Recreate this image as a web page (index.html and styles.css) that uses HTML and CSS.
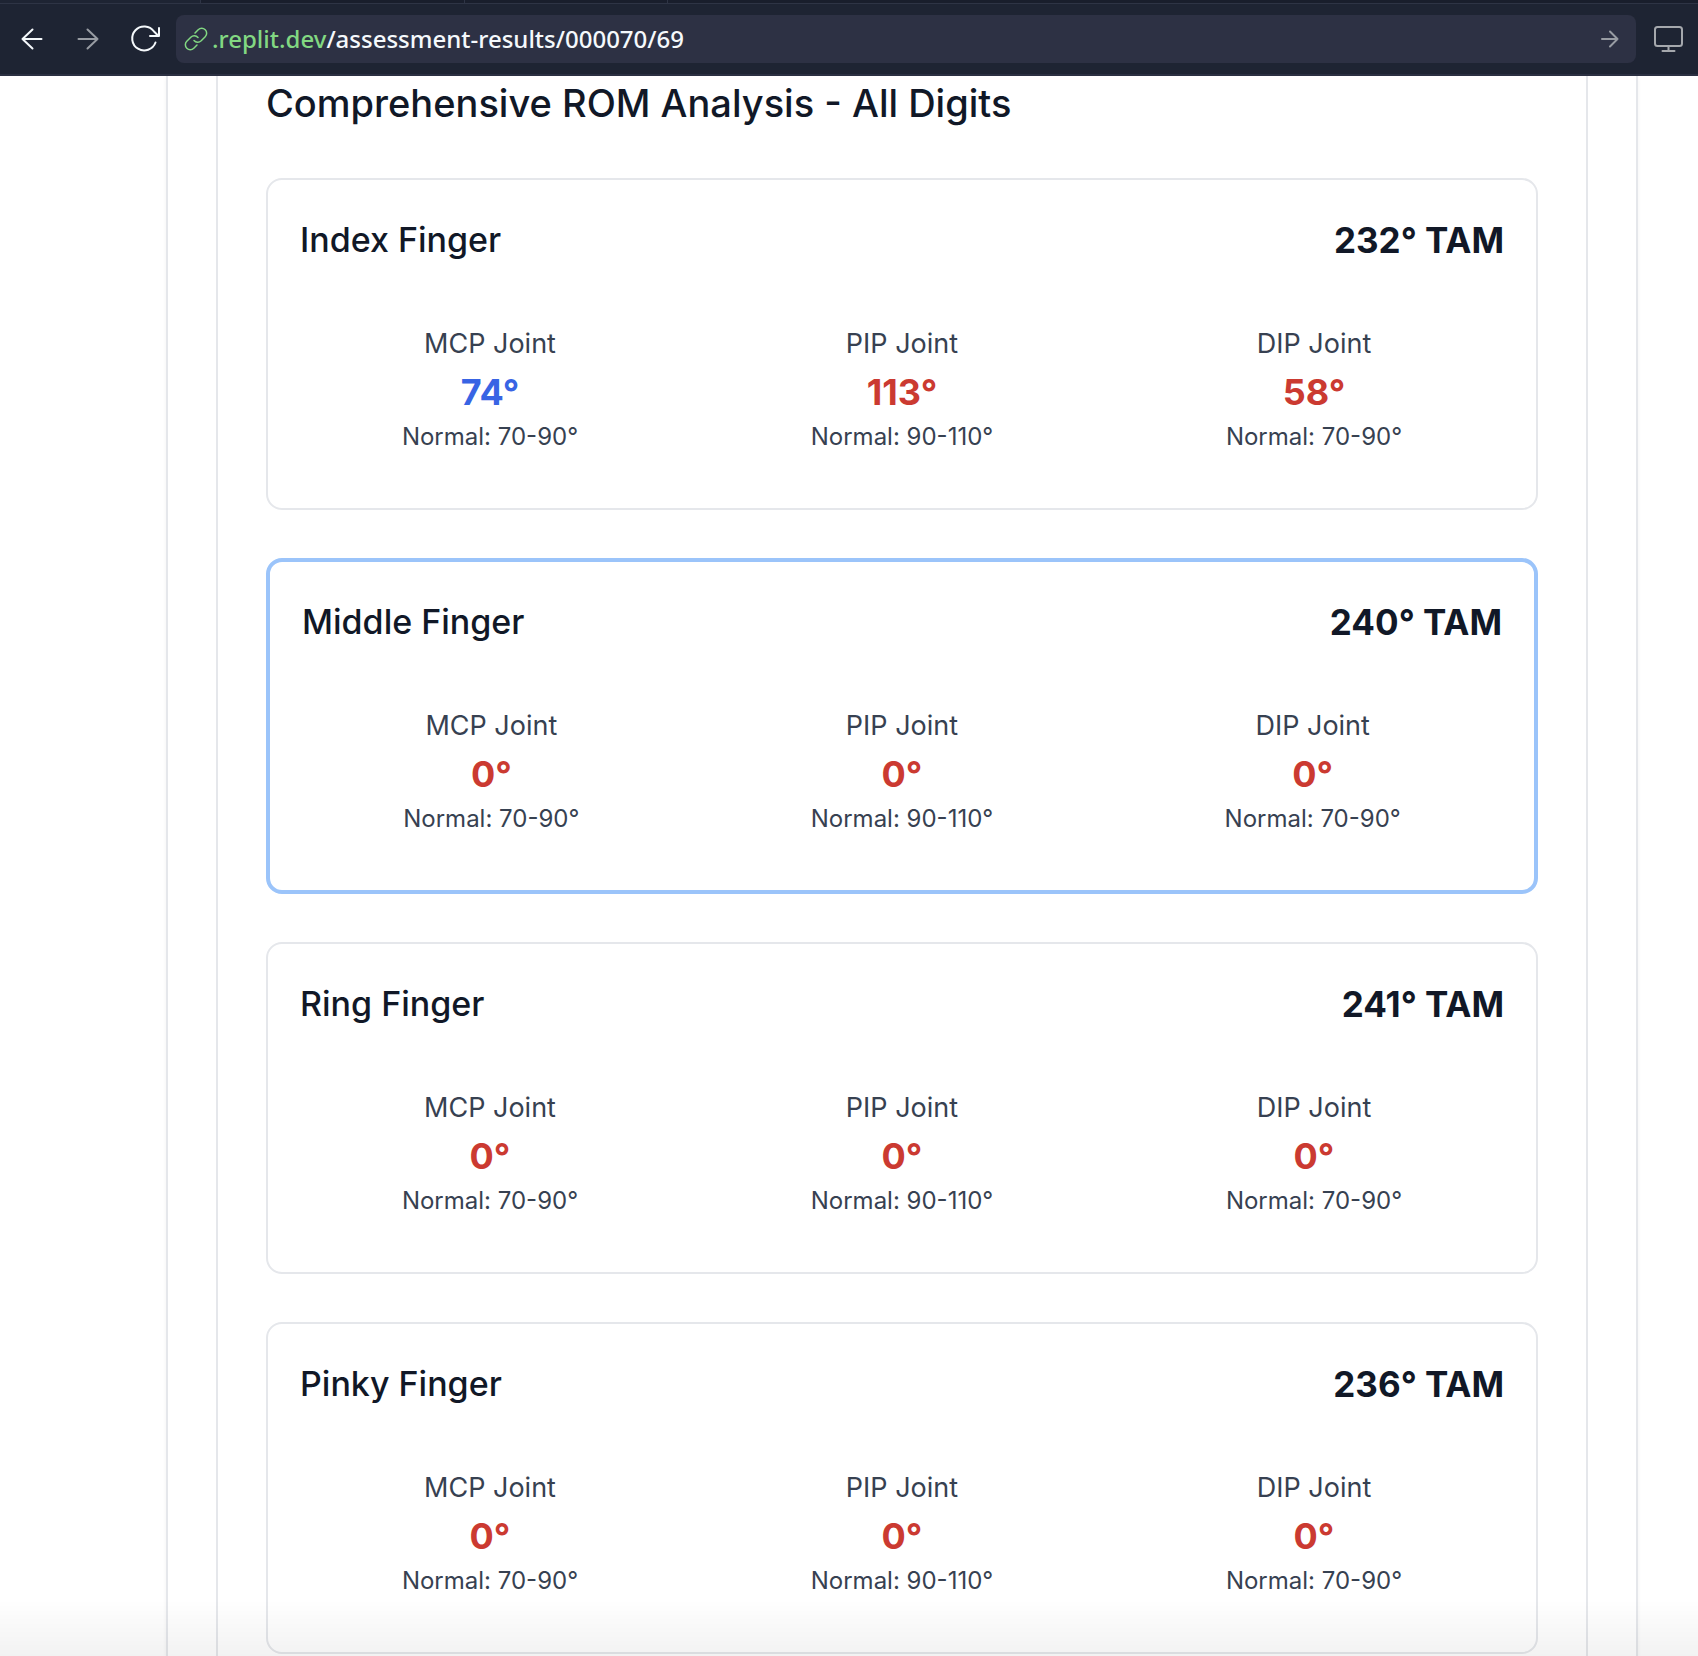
FILE: index.html
```html
<!DOCTYPE html>
<html lang="en">
<head>
<meta charset="utf-8">
<meta name="viewport" content="width=device-width, initial-scale=1">
<title>Assessment Results</title>
<link rel="stylesheet" href="styles.css">
</head>
<body>
<header class="browser">
  <div class="tabs"><span class="tab tab-first"></span><span class="tab tab-second"></span><span class="tab tab-rest"></span></div>
  <nav class="toolbar" aria-label="Browser">
    <div class="nav-buttons">
      <button class="icon-button" type="button" aria-label="Back">
        <svg width="24" height="24" viewBox="0 0 24 24"><path d="M21.500 12H2.500M12.500 2.500L2.500 12l10 9.500"/></svg>
      </button>
      <button class="icon-button muted" type="button" aria-label="Forward">
        <svg width="24" height="24" viewBox="0 0 24 24"><path d="M2.500 12h19M11.500 2.500L21.500 12l-10 9.500"/></svg>
      </button>
      <button class="icon-button" type="button" aria-label="Reload">
        <svg width="30" height="32" viewBox="0 0 30 32"><path d="M23.500 19.500A12 12 0 1 1 22 8.500L26.500 13M27 5V13H18"/></svg>
      </button>
    </div>
    <form class="address">
      <svg class="link-icon" width="24" height="24" viewBox="0 0 24 24"><path d="M10 13.500a5 5 0 0 0 7.200.300l4-4a4.900 4.900 0 0 0-7-7l-3.200 3.200M14 10.500a5 5 0 0 0-7.200-.300l-4 4a4.900 4.900 0 0 0 7 7l3.200-3.200"/></svg>
      <label class="host" for="path">.replit.dev</label>
      <input class="path" id="path" type="text" value="/assessment-results/000070/69">
      <button class="icon-button muted" type="button" aria-label="Go">
        <svg width="20" height="20" viewBox="0 0 20 20"><path d="M2 10h15.500M10 2.500l7.500 7.500-7.500 7.500"/></svg>
      </button>
    </form>
    <button class="icon-button screen" type="button" aria-label="Screen size">
      <svg width="32" height="32" viewBox="0 0 32 32"><rect x="3" y="4" width="27" height="19" rx="2.500"/><path d="M16.500 23v5M10.500 28h12"/></svg>
    </button>
  </nav>
</header>
<main class="page">
  <div class="panel outer">
    <section class="panel inner">
      <h2 class="title">Comprehensive ROM Analysis - All Digits</h2>
      <div class="cards">
        <article class="card">
          <header class="card-head"><h3 class="finger">Index Finger</h3><strong class="total">232° TAM</strong></header>
          <div class="joints">
            <div class="joint"><div class="name">MCP Joint</div><div class="value good">74°</div><div class="normal">Normal: 70-90°</div></div>
            <div class="joint"><div class="name">PIP Joint</div><div class="value">113°</div><div class="normal">Normal: 90-110°</div></div>
            <div class="joint"><div class="name">DIP Joint</div><div class="value">58°</div><div class="normal">Normal: 70-90°</div></div>
          </div>
        </article>
        <article class="card selected">
          <header class="card-head"><h3 class="finger">Middle Finger</h3><strong class="total">240° TAM</strong></header>
          <div class="joints">
            <div class="joint"><div class="name">MCP Joint</div><div class="value">0°</div><div class="normal">Normal: 70-90°</div></div>
            <div class="joint"><div class="name">PIP Joint</div><div class="value">0°</div><div class="normal">Normal: 90-110°</div></div>
            <div class="joint"><div class="name">DIP Joint</div><div class="value">0°</div><div class="normal">Normal: 70-90°</div></div>
          </div>
        </article>
        <article class="card">
          <header class="card-head"><h3 class="finger">Ring Finger</h3><strong class="total">241° TAM</strong></header>
          <div class="joints">
            <div class="joint"><div class="name">MCP Joint</div><div class="value">0°</div><div class="normal">Normal: 70-90°</div></div>
            <div class="joint"><div class="name">PIP Joint</div><div class="value">0°</div><div class="normal">Normal: 90-110°</div></div>
            <div class="joint"><div class="name">DIP Joint</div><div class="value">0°</div><div class="normal">Normal: 70-90°</div></div>
          </div>
        </article>
        <article class="card">
          <header class="card-head"><h3 class="finger">Pinky Finger</h3><strong class="total">236° TAM</strong></header>
          <div class="joints">
            <div class="joint"><div class="name">MCP Joint</div><div class="value">0°</div><div class="normal">Normal: 70-90°</div></div>
            <div class="joint"><div class="name">PIP Joint</div><div class="value">0°</div><div class="normal">Normal: 90-110°</div></div>
            <div class="joint"><div class="name">DIP Joint</div><div class="value">0°</div><div class="normal">Normal: 70-90°</div></div>
          </div>
        </article>
      </div>
    </section>
  </div>
</main>
<div class="fade"></div>
</body>
</html>
```
FILE: styles.css
```css
*, *::before, *::after { box-sizing: border-box; }

body {
  margin: 0;
  min-height: 100vh;
  display: flex;
  flex-direction: column;
  background: #fff;
  color: #111827;
  font-family: Inter, "Liberation Sans", sans-serif;
}

h2, h3 { margin: 0; font-weight: 500; }

/* Browser chrome */
.browser {
  background: #1e2433;
  border-bottom: 2px solid #2b3042;
}

.tabs {
  display: flex;
  height: 4px;
  padding-left: 200px;
  border-bottom: 1px solid #2e3445;
}
.tab {
  background: #191e2c;
  border-left: 1px solid #2e3445;
}
.tab-first { width: 264px; }
.tab-second { width: 203px; }
.tab-rest { flex: 1; }

.toolbar {
  display: flex;
  align-items: center;
  gap: 16px;
  height: 70px;
  padding: 0 14px 0 20px;
}

.nav-buttons {
  display: flex;
  align-items: center;
  gap: 32px;
  width: 140px;
}

.icon-button {
  display: flex;
  flex: none;
  padding: 0;
  border: 0;
  background: none;
  color: #f5f9fc;
}
.muted { color: #989ca3; }
.screen { color: #a5a8ad; }

svg {
  flex: none;
  overflow: visible;
  fill: none;
  stroke: currentColor;
  stroke-width: 2;
  stroke-linecap: round;
  stroke-linejoin: round;
}

.address {
  display: flex;
  flex: 1;
  align-items: center;
  height: 48px;
  padding: 0 16px 0 8px;
  border-radius: 8px;
  background: #2d3144;
  font-family: "Noto Sans", sans-serif;
  font-size: 24px;
  font-weight: 500;
  line-height: 32px;
}
.link-icon { margin-right: 4px; stroke-width: 1.5; }
.link-icon, .host { color: #82d882; }
.path {
  flex: 1;
  min-width: 0;
  padding: 0;
  border: 0;
  outline: 0;
  background: none;
  color: #f5f9fc;
  font: inherit;
}

/* Results page */
.page {
  display: flex;
  flex: 1;
  flex-direction: column;
  padding: 0 60px 0 166px;
}
.panel {
  display: flex;
  flex: 1;
  flex-direction: column;
  padding: 0 48px;
  border: solid #e5e7eb;
  border-width: 0 2px;
}
.outer { box-shadow: 0 2px 4px rgba(0, 0, 0, 0.05); }

.title {
  margin-bottom: 48px;
  font-size: 38px;
  line-height: 54px;
}

.cards { display: grid; gap: 48px; }
.card {
  padding: 32px;
  border: 2px solid #e5e7eb;
  border-radius: 16px;
}
.selected { border: 4px solid #9bc4fa; }

.card-head {
  display: flex;
  justify-content: space-between;
  margin-bottom: 32px;
  line-height: 56px;
}
.finger { font-size: 34px; }
.total { font-size: 35px; font-weight: 700; }

.joints {
  display: grid;
  grid-template-columns: repeat(3, 1fr);
  gap: 32px;
}
.joint {
  padding: 24px 24px 22px;
  color: #374151;
  text-align: center;
}
.name { font-size: 27px; line-height: 40px; }
.value {
  color: #cb3a31;
  font-size: 36px;
  font-weight: 700;
  line-height: 56px;
}
.good { color: #3864e4; }
.normal { font-size: 24px; line-height: 34px; }

/* Soft shading along the bottom of the window */
.fade {
  position: fixed;
  right: 0;
  bottom: 0;
  left: 0;
  height: 56px;
  background: linear-gradient(rgba(0, 0, 0, 0), rgba(0, 0, 0, 0.05));
  pointer-events: none;
}
```
